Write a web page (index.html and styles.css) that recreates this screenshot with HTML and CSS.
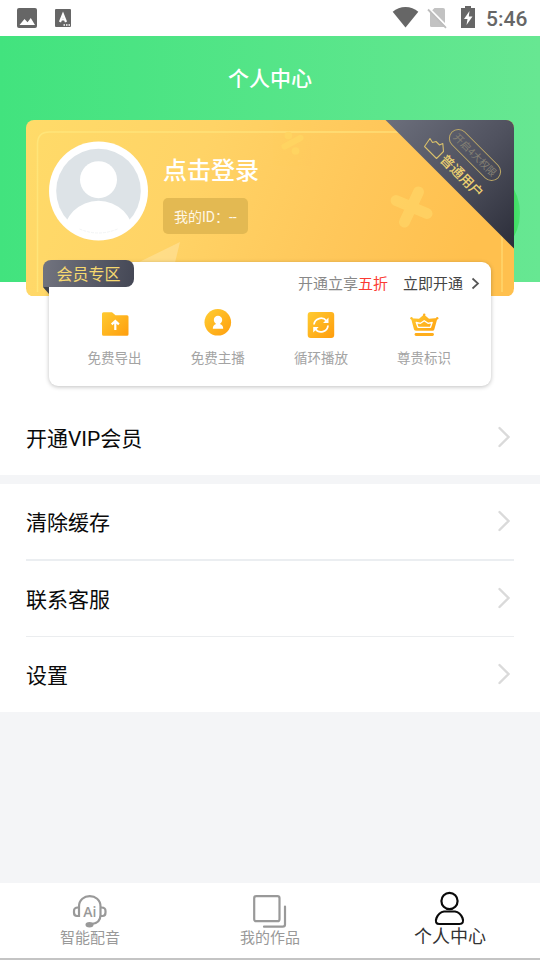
FILE: index.html
```html
<!DOCTYPE html>
<html lang="zh-CN">
<head>
<meta charset="utf-8">
<title>个人中心</title>
<link rel="stylesheet" href="styles.css">
</head>
<body>
<div class="app">
  <div class="status">
    <svg width="80" height="36" viewBox="0 0 80 36">
      <rect x="17" y="8" width="20" height="20" rx="2" fill="#666"/>
      <path d="M19.5 25 24.5 19l3 3.3 3.3-4.4 4.2 7.1z" fill="#fff"/>
      <rect x="55" y="9" width="16" height="18" rx="1" fill="#666"/>
      <path d="M60 22 63 14.500l3 7.500M61 19.500h4" fill="none" stroke="#fff" stroke-width="2.200"/>
      <path d="M63.5 25h1.500M66 25h1.500M68.500 25h1.500" stroke="#fff" stroke-width="1.500"/>
    </svg>
    <div class="status-right">
      <svg width="90" height="36" viewBox="0 0 90 36">
        <path d="M2.700 11.800C9.500 5.500 21.500 5.500 28.300 11.800L15.500 27.500z" fill="#666"/>
        <path d="M44.500 8H53Q55 8 55 10V25.500Q55 27 53.500 27H41.500Q40 27 40 25.500V12.500z" fill="#c2c2c2"/>
        <path d="M38.800 8.200 57 26.500" stroke="#fff" stroke-width="2"/>
        <path d="M38 9.500 56 27.800" stroke="#bdbdbd" stroke-width="1.800"/>
        <path d="M75 6h6v2h4v20H71V8h4z" fill="#666"/>
        <path d="M79.500 11 74 19h3.500l-1 6 6-8.500h-3.700z" fill="#fff"/>
      </svg>
      <span class="clock">5:46</span>
    </div>
  </div>

  <header class="hero">
    <h1>个人中心</h1>
    <section class="card">
      <svg class="card-art" width="500" height="177" viewBox="0 0 500 177">
        <defs>
          <linearGradient id="gold" x1="0" y1="0" x2="1" y2=".15"><stop offset="0" stop-color="#ffdb69"/><stop offset=".38" stop-color="#ffd366"/><stop offset=".72" stop-color="#ffc75a"/><stop offset="1" stop-color="#ffc04e"/></linearGradient>
          <linearGradient id="line" x1="0" x2="1"><stop offset="0" stop-color="#ffe579"/><stop offset=".65" stop-color="#ffe078"/><stop offset="1" stop-color="#ffd66c"/></linearGradient>
          <linearGradient id="dark" x1="0" y1="0" x2="1" y2="1"><stop offset="0" stop-color="#6c6f7c"/><stop offset=".5" stop-color="#50525f"/><stop offset="1" stop-color="#2b2d39"/></linearGradient>
          <linearGradient id="orb" x1="0" x2="1"><stop offset=".9" stop-color="#3fdc5f"/><stop offset="1" stop-color="#4ae272"/></linearGradient>
          <clipPath id="cardclip"><rect width="488" height="176.500" rx="8"/></clipPath>
        </defs>
        <ellipse cx="456" cy="93" rx="38" ry="44" fill="url(#orb)"/>
        <g clip-path="url(#cardclip)">
          <rect width="488" height="177" fill="url(#gold)"/>
          <path d="M11.500 172V24q0-12 12-12H464q12 0 12 12V172" fill="none" stroke="url(#line)" stroke-width="1.500"/>
          <path d="M103 147 154 122 146 155z" fill="#ffe29a" opacity=".65"/>
          <g stroke="#ffd562" stroke-linecap="round" opacity=".85"><path d="M258.500 26.500 274.500 18" stroke-width="6"/><path d="M262.300 15.500h.1M269.500 31h.1" stroke-width="7.500"/></g>
          <g fill="none" stroke="#ffd768" stroke-width="11" stroke-linecap="round" opacity=".65"><path d="M392.500 72 378.500 102M370 80.500 401 93.500"/></g>
          <path d="M359.500 0H488V128.500z" fill="url(#dark)"/>
          <path d="M404 18.500 398.500 26.500 410.500 38.500 417.500 31.500 416.800 23.500 413.500 25 410 21.500 406.500 22.500z" fill="none" stroke="#d8bf6b" stroke-width="1.100" stroke-linejoin="round"/>
        </g>
      </svg>
      <span class="perk">开启4大权限</span>
      <span class="level">普通用户</span>
      <div class="profile">
        <svg width="100" height="100" viewBox="0 0 100 100">
          <defs><clipPath id="face"><circle cx="50.500" cy="50" r="43"/></clipPath></defs>
          <circle cx="50.500" cy="50" r="49.500" fill="#fff"/>
          <circle cx="50.500" cy="50" r="42.300" fill="#dde3e7"/>
          <circle cx="50.500" cy="38.700" r="18.500" fill="#fff"/>
          <circle cx="50.500" cy="95.200" r="35.500" fill="#fff" clip-path="url(#face)"/>
          <path d="M31.500 88Q50.500 96 69.500 88" fill="none" stroke="#eceff1" stroke-width=".7" stroke-dasharray="3 1"/>
        </svg>
        <div class="who">
          <div class="login">点击登录</div>
          <div class="uid">我的ID：--</div>
        </div>
      </div>
    </section>
  </header>

  <div class="member">
    <section class="panel">
      <div class="zone">会员专区</div>
      <div class="offer"><span>开通立享<em>五折</em></span><b>立即开通</b>
        <svg width="9" height="13" viewBox="0 0 9 13"><path d="M1.500 1.500 7 6.500 1.500 11.500" fill="none" stroke="#555" stroke-width="1.700"/></svg>
      </div>
      <div class="features">
        <div class="feature">
          <svg width="30" height="30" viewBox="0 0 30 30"><defs><linearGradient id="or" gradientUnits="userSpaceOnUse" x1="3" y1="3" x2="27" y2="27"><stop offset="0" stop-color="#ffcb31"/><stop offset="1" stop-color="#ffa00f"/></linearGradient></defs>
            <path d="M3.500 4.200H12L15.500 7.200H27Q28.500 7.200 28.500 8.700V26.200Q28.500 27.700 27 27.700H3.500Q2 27.700 2 26.200V5.700Q2 4.200 3.500 4.200z" fill="url(#or)"/><path d="M15.300 22V13M11.700 16.400 15.300 13 18.900 16.400" fill="none" stroke="#fff" stroke-width="2.200"/></svg>
          <span>免费导出</span>
        </div>
        <div class="feature">
          <svg width="30" height="30" viewBox="0 0 30 30"><circle cx="14.800" cy="14.300" r="13.300" fill="url(#or)"/><circle cx="15" cy="12" r="4.200" fill="#fff"/><path d="M13 14h4v2q3.200 1 3.200 4.700H9.800Q9.800 17 13 16z" fill="#fff"/></svg>
          <span>免费主播</span>
        </div>
        <div class="feature">
          <svg width="30" height="30" viewBox="0 0 30 30"><rect x="1.700" y="4" width="26.500" height="26" rx="3" fill="url(#or)"/><g fill="none" stroke="#fff" stroke-width="1.800"><path d="M8 16.500A7 7 0 0 1 20.500 13M22 17.500A7 7 0 0 1 9.400 21"/></g><path d="M22.500 9.500V15H17zM7.200 24.500V19H12.700z" fill="#fff"/></svg>
          <span>循环播放</span>
        </div>
        <div class="feature">
          <svg width="30" height="30" viewBox="0 0 30 30"><path d="M2 10.300 10 10.800 15 6.500 20 10.800 28.500 10 25.300 21.500Q25 22.700 23.500 22.700H7.500Q5.500 22.700 5 21.500z" fill="url(#or)"/><circle cx="2.500" cy="10.300" r="1.200" fill="#ffc02a"/><circle cx="28.200" cy="10.300" r="1.200" fill="#ffb01f"/><circle cx="15.200" cy="6.800" r="1.200" fill="#ffb01f"/><path d="M7.200 14.300 11.500 15.300 15.200 12.700 19 15.300 23.200 14.300 21.500 19.300H9z" fill="none" stroke="#fff" stroke-width="1.300" stroke-linejoin="round"/><path d="M7 26.500H23.500" stroke="#ffae1c" stroke-width="2.800" stroke-linecap="round"/></svg>
          <span>尊贵标识</span>
        </div>
      </div>
    </section>
  </div>

  <ul class="list vip">
    <li><span>开通VIP会员</span><svg class="go" viewBox="0 0 14 22"><path d="M2.500 2 11.500 11 2.500 20"/></svg></li>
  </ul>
  <ul class="list main">
    <li><span>清除缓存</span><svg class="go" viewBox="0 0 14 22"><path d="M2.500 2 11.500 11 2.500 20"/></svg></li>
    <li><span>联系客服</span><svg class="go" viewBox="0 0 14 22"><path d="M2.500 2 11.500 11 2.500 20"/></svg></li>
    <li><span>设置</span><svg class="go" viewBox="0 0 14 22"><path d="M2.500 2 11.500 11 2.500 20"/></svg></li>
  </ul>

  <nav class="tabs">
    <div class="tab">
      <svg width="36" height="36" viewBox="0 0 36 36"><g fill="none" stroke="#999" stroke-width="2.200"><path d="M7 24V13.500C7 -.3 28.500 -.3 28.500 13.500V22C28.500 27.500 25 30.700 19 31.200"/><path d="M7 14.500H6Q2 14.500 2 18V19.500Q2 23 5 23H7M28.500 14.500H29.500Q33.500 14.500 33.500 18V19.500Q33.500 23 30.500 23H28.500"/></g><ellipse cx="17.500" cy="31.800" rx="4" ry="2.700" fill="#999"/><text class="ai" x="17.900" y="23.500" text-anchor="middle">Ai</text></svg>
      <span>智能配音</span>
    </div>
    <div class="tab">
      <svg width="36" height="36" viewBox="0 0 36 36"><g fill="none" stroke="#999" stroke-width="2.200"><rect x="2.200" y="3.200" width="25.300" height="25" rx="2"/><path d="M33 13.500V31.500Q33 33.700 30.700 33.700H12" stroke-linecap="round"/></g></svg>
      <span>我的作品</span>
    </div>
    <div class="tab active">
      <svg width="36" height="36" viewBox="0 0 36 36"><g fill="none" stroke="#0a0a0a" stroke-width="2.200"><circle cx="17.500" cy="12" r="8.100"/><path d="M12 22.500H23Q28 23.200 30.500 29C32 32.800 30.500 35 27.500 35H7.500C4.200 35 3 32.800 4.500 29Q7 23.200 12 22.500z"/></g></svg>
      <span>个人中心</span>
    </div>
  </nav>
</div>
</body>
</html>
```
FILE: styles.css
```css
* { box-sizing: border-box; }
body { margin: 0; font-family: Roboto, "Noto Sans CJK SC", sans-serif; background: #f4f5f7; }
svg { display: block; overflow: visible; }
.app { width: 540px; height: 960px; display: flex; flex-direction: column; overflow: hidden; }

.status { height: 36px; flex: none; background: #fff; display: flex; justify-content: space-between; }
.status-right { display: flex; align-items: center; width: 150px; gap: 6px; }
.clock { font-size: 21px; font-weight: 500; color: #666; line-height: 36px; padding-top: 2px; }

.hero {
  flex: none; padding: 0 26px; margin-bottom: -34px;
  background: linear-gradient(90deg, #42e37e, #67e792) 0 0 / 100% 246px no-repeat #fff;
}
.hero h1 { margin: 0; height: 83.5px; line-height: 86px; text-align: center; font-size: 21px; font-weight: 500; color: #fff; }
.card { position: relative; height: 176.5px; padding: 21.5px 0 0 22px; }
.card-art { position: absolute; left: 0; top: 0; }
.profile { position: relative; display: flex; gap: 15px; }
.login { color: #fff; font-size: 24px; font-weight: 500; line-height: 36px; padding-top: 12px; height: 57px; }
.uid { height: 36px; line-height: 38px; width: 85px; padding-left: 11px; border-radius: 5px; background: #e3b952; color: #fff7e6; font-size: 14px; white-space: nowrap; }
.perk, .level { position: absolute; transform: translate(-50%, -50%) rotate(45deg); white-space: nowrap; }
.perk {
  left: 449px; top: 35px; width: 66px; height: 19px; line-height: 17px; text-align: center;
  border: 1px solid #c0ab67; border-radius: 10px; color: #858174; font-size: 10px;
}
.level { left: 436px; top: 56px; font-size: 13.5px; line-height: 16px; font-weight: 500; color: #ecd071; }

.member { position: relative; flex: none; padding-left: 49px; background: linear-gradient(#fff, #fff) 0 34px / 100% 90px no-repeat; }
.panel {
  position: relative; width: 442px; height: 124px;
  background: #fff; border-radius: 9px; box-shadow: 0 1px 4px rgba(0, 0, 0, .25);
}
.zone {
  position: absolute; left: -6px; top: -2px; width: 91px; height: 27px; line-height: 29px; text-align: center;
  border-radius: 8px 8px 8px 0; background: linear-gradient(100deg, #72747f, #444755);
  color: #f5d86f; font-size: 16px;
}
.zone::after { content: ""; position: absolute; left: 0; top: 27px; border-style: solid; border-width: 0 6px 7px 0; border-color: transparent #3d404b transparent transparent; }
.offer { display: flex; justify-content: flex-end; align-items: center; height: 43px; padding-right: 11px; font-size: 15px; color: #888; }
.offer span, .offer b { margin-top: -2px; }
.offer em { font-style: normal; color: #fb3b33; }
.offer b { margin-left: 15px; margin-right: 8px; font-weight: 400; color: #444; }
.features { display: grid; grid-template-columns: repeat(4, 103.2px); justify-content: center; padding: 3px 1.4px 0 0; }
.feature { display: flex; flex-direction: column; align-items: center; font-size: 13.5px; line-height: 20px; gap: 10px; color: #a3a3a3; }

.list { list-style: none; flex: none; margin: 0; padding: 0 26px; background: #fff; font-size: 21px; color: #0a0a0a; }
.list li { display: flex; justify-content: space-between; align-items: center; height: 76px; }
.list span { margin-top: -2px; }
.go { width: 14px; height: 22px; margin: -3px 3px 0 0; fill: none; stroke: #dadada; stroke-width: 2.4; stroke-linecap: round; }
.vip { padding-top: 14px; height: 89px; }
.main { margin-top: 9px; height: 228px; }
.main li:nth-child(1) { height: 77px; border-bottom: 2px solid #ebeef1; }
.main li:nth-child(1) .go { margin-top: -1px; }
.main li:nth-child(2) { border-bottom: 1px solid #ebedef; padding-top: 1px; }

.tabs { margin-top: auto; flex: none; height: 77px; background: #fff; border-bottom: 2px solid #c4c4c4; display: grid; grid-template-columns: repeat(3, 1fr); }
.tab { display: flex; flex-direction: column; align-items: center; padding-top: 10px; font-size: 15px; line-height: 18px; color: #999; }
.tab.active { padding-top: 6px; font-size: 18px; line-height: 24px; color: #333; }
.ai { font: 600 14px "Open Sans", sans-serif; fill: #999; }
```
